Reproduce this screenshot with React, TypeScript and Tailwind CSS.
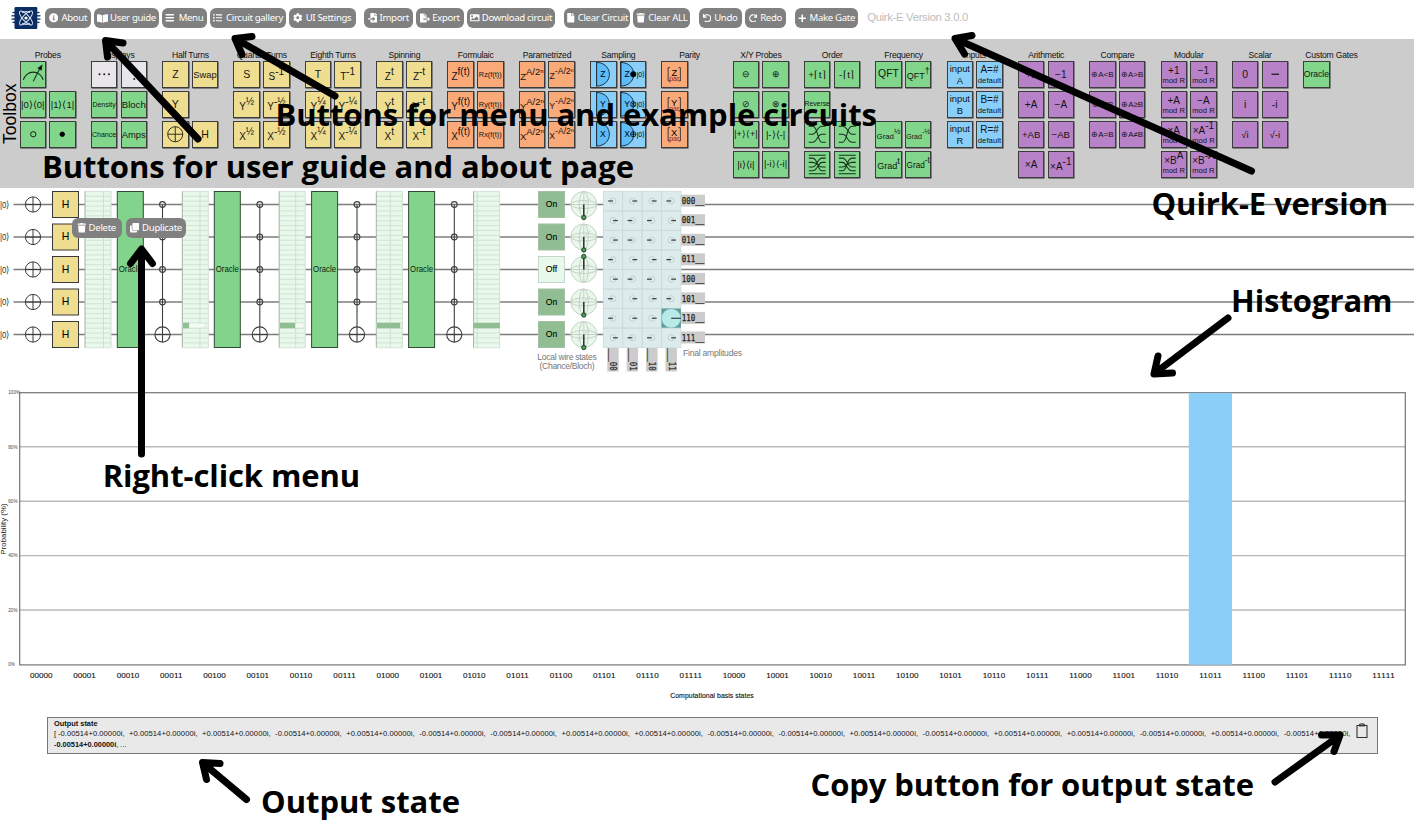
import React from "react";
import {
  FaInfoCircle, FaBookOpen, FaBars, FaListUl, FaCog, FaFileImport, FaFileExport, FaImage,
  FaFile, FaTrash, FaUndo, FaRedo, FaPlus, FaClone,
} from "react-icons/fa";

type Btn = { label: string; icon: React.ReactNode; cls: string };

const buttonGroups: Btn[][] = [
  [
    { label: "About", icon: <FaInfoCircle size={9.5} />, cls: "w-[46px] gap-[3px]" },
    { label: "User guide", icon: <FaBookOpen size={11} />, cls: "w-[65px] gap-[2px]" },
    { label: "Menu", icon: <FaBars size={9.5} />, cls: "w-[44.5px] gap-[4px]" },
    { label: "Circuit gallery", icon: <FaListUl size={9.5} />, cls: "w-[76.5px] gap-[4px]" },
    { label: "UI Settings", icon: <FaCog size={9.5} />, cls: "w-[66.5px] gap-[3px]" },
  ],
  [
    { label: "Import", icon: <FaFileImport size={9.5} />, cls: "w-[48.5px] gap-[2px]" },
    { label: "Export", icon: <FaFileExport size={10} />, cls: "w-[48.5px] gap-[2px]" },
    { label: "Download circuit", icon: <FaImage size={9.5} />, cls: "w-[88px] gap-[2px]" },
  ],
  [
    { label: "Clear Circuit", icon: <FaFile size={9.5} />, cls: "w-[66.5px] gap-[2px]" },
    { label: "Clear ALL", icon: <FaTrash size={9.5} />, cls: "w-[56.5px] gap-[3px]" },
  ],
  [
    { label: "Undo", icon: <FaUndo size={8.5} />, cls: "w-[43px] gap-[3px]" },
    { label: "Redo", icon: <FaRedo size={8.5} />, cls: "w-[41.5px] gap-[3px]" },
  ],
  [{ label: "Make Gate", icon: <FaPlus size={8.5} />, cls: "w-[63.5px] gap-[3px]" }],
];

function ToolButton({ label, icon, cls }: Btn) {
  return (
    <button
      className={`flex h-[20px] shrink-0 items-center justify-center rounded-[6px] bg-[#808080] font-['Noto_Sans',sans-serif] text-[9.6px] leading-none tracking-[-0.32px] whitespace-nowrap text-white ${cls}`}
    >
      {icon}
      <span>{label}</span>
    </button>
  );
}

function Logo() {
  return (
    <svg width="30" height="24" viewBox="0 0 30 24" className="block shrink-0">
      {[5.5, 8.8, 12.1, 15.4].map((y) => (
        <path key={y} d={`M${y < 6 || y > 15 ? 1.5 : 0.5} ${y + 1}H${y < 6 || y > 15 ? 28.5 : 29.5}`} stroke="#0c2f66" strokeWidth="1.3" />
      ))}
      <rect x="3.5" y="1" width="22.8" height="22" rx="1.2" fill="#0a2d63" />
      <g fill="none" stroke="#dfe8f5" strokeWidth="1">
        <ellipse cx="15" cy="12" rx="9" ry="3.2" transform="rotate(47 15 12)" />
        <ellipse cx="15" cy="12" rx="9" ry="3.2" transform="rotate(-47 15 12)" />
        <path d="M11 6.500Q15 4.500 19 6.500M11 17.500Q15 19.500 19 17.500" />
      </g>
      <circle cx="15" cy="12" r="1.6" fill="#fff" />
    </svg>
  );
}

type G =
  | null
  | { k: "t"; t: string; f?: string }
  | { k: "p"; b: string; s: string; f?: string; m?: string }
  | { k: "2"; a: string; b: string; f: string; h: string }
  | { k: "s"; n: React.ReactNode };

const F11 = "text-[10.5px]";
const t = (s: string, f = "text-[9.6px]"): G => ({ k: "t", t: s, f });
const p = (b: string, s: string, f = "text-[10px]"): G => ({ k: "p", b, s, f });
const mod = (b: string, s = ""): G => ({ k: "p", b, s, f: "text-[10px]", m: "mod R" });
const input = (x: string): G => ({ k: "2", a: "input", b: x, f: "text-[9.4px]", h: "text-[9.4px]" });
const dflt = (x: string): G => ({ k: "2", a: x, b: "default", f: "text-[10px]", h: "text-[7.8px]" });
const s = (n: React.ReactNode): G => ({ k: "s", n });

const txt = "font-['Liberation_Sans',Arial,sans-serif]";

const sampler = (l: string, sym: number) =>
  s(
    <>
      <path d={sym < 0 ? "M6 0v26" : "M0 0v26"} stroke="#1c2a33" strokeWidth="1" />
      <path
        d={sym < 0 ? "M6 .5C14 .5 19.5 6 19.5 13S14 25.5 6 25.5Z" : "M0 .5C8 .5 13.5 6 13.5 13S8 25.5 0 25.5Z"}
        fill="#5dbcf9" stroke="#1c2a33" strokeWidth="1"
      />
      <text x={sym < 0 ? 12.5 : 6.5} y="16.2" textAnchor="middle" fontSize="9" className={txt}>{l}</text>
      {sym >= 0 && (
        <>
          <circle cx="13" cy="13" r="2.8" fill={sym === 0 ? "#000" : "none"} stroke="#000" strokeWidth=".8" />
          {sym === 1 && <path d="M11 11l4 4M15 11l-4 4" stroke="#000" strokeWidth=".8" />}
          {sym === 2 && <path d="M10.2 13h5.6M13 10.2v5.6" stroke="#000" strokeWidth=".8" />}
          <text x="16.4" y="16" fontSize="8.4" textLength="9" lengthAdjust="spacingAndGlyphs" className={txt}>|0⟩</text>
        </>
      )}
    </>,
  );
const parity = (l: string) =>
  s(
    <>
      <path d="M8.5 6H6.5V20H8.5M17.5 6H19.5V20H17.5" fill="none" stroke="#333" strokeWidth="1" />
      <text x="13" y="15" textAnchor="middle" fontSize="10" className={txt}>{l}</text>
      <text x="13" y="19.800" textAnchor="middle" fontSize="7.4" fill="#a01414" className={txt}>par</text>
    </>,
  );
const swirl = (left: boolean, double: boolean) =>
  s(
    <g transform={left ? undefined : "matrix(-1 0 0 1 26 0)"} fill="none" stroke="#17301a" strokeWidth="1.1">
      {double ? (
        <path d="M4 3.500H22M4 6.500H8C14 6.500 13 20 18 20H22M4 11H8C13 11 14 16 18 16H22M4 16H8C13 16 13 6.500 18 6.500H22M4 20H8C13 20 14 11 18 11H22M4 23H22" />
      ) : (
        <path d="M4 4.500H8C14 4.500 13 21.500 18 21.500H22M4 13H8C12 13 13 4.500 18 4.500H22M4 21.500H8C13 21.500 13 13 18 13H22" />
      )}
    </g>,
  );

const GREEN = "bg-[#82d68c]";
const YELLOW = "bg-[#efdd90]";
const ORANGE = "bg-[#faaa78]";
const BLUE = "bg-[#8acffa]";
const PURPLE = "bg-[#b882c8]";
const GREY = "bg-[#e8e6ea]";

const meter = s(
  <g fill="none" stroke="#17301a" strokeWidth="1.1">
    <path d="M2.500 19A10.8 10.8 0 0 1 23.500 19" />
    <path d="M13 20.500L20.500 6" />
    <path d="M22.200 3.500l-.6 5-3.400-2z" fill="#000" />
  </g>,
);
const dot = (fill: string, r = 2.8) => s(<circle cx="13" cy="13" r={r} fill={fill} stroke="#000" strokeWidth=".9" />);
const plusCircle = s(
  <g fill="none" stroke="#2b2818" strokeWidth="1">
    <circle cx="13" cy="13" r="8" /><path d="M5 13h16M13 5v16" />
  </g>,
);
const ellipsis = s(
  <g fill="#222">
    <circle cx="8" cy="13" r="1.100" /><circle cx="13" cy="13" r="1.100" /><circle cx="18" cy="13" r="1.100" />
  </g>,
);
const vdots = s(
  <g fill="#222">
    <circle cx="13" cy="8" r="1.100" /><circle cx="13" cy="13" r="1.100" /><circle cx="13" cy="18" r="1.100" />
  </g>,
);
const minusBar = s(<path d="M9 13h8" stroke="#222" strokeWidth="1.400" />);

const groups: { name: string; color: string; gates: G[]; colors?: Record<number, string> }[] = [
  { name: "Probes", color: GREEN, gates: [meter, null, t("|0⟩⟨0|", "text-[9.5px]"), t("|1⟩⟨1|", "text-[9.5px]"), dot("none"), dot("#000", 2.4)] },
  {
    name: "Displays", color: GREEN, colors: { 0: GREY, 1: GREY },
    gates: [ellipsis, vdots, t("Density", "text-[7px]"), t("Bloch"), t("Chance", "text-[7px]"), t("Amps", "text-[9.4px]")],
  },
  { name: "Half Turns", color: YELLOW, gates: [t("Z", F11), t("Swap", "text-[9.4px]"), t("Y", F11), null, plusCircle, t("H", F11)] },
  { name: "Quarter Turns", color: YELLOW, gates: [t("S", F11), p("S", "-1"), p("Y", "½"), p("Y", "-½"), p("X", "½"), p("X", "-½")] },
  { name: "Eighth Turns", color: YELLOW, gates: [t("T", F11), p("T", "-1"), p("Y", "¼"), p("Y", "-¼"), p("X", "¼"), p("X", "-¼")] },
  { name: "Spinning", color: YELLOW, gates: [p("Z", "t"), p("Z", "-t"), p("Y", "t"), p("Y", "-t"), p("X", "t"), p("X", "-t")] },
  {
    name: "Formulaic", color: ORANGE,
    gates: [p("Z", "f(t)"), t("Rz(f(t))", "text-[7.4px]"), p("Y", "f(t)"), t("Ry(f(t))", "text-[7.4px]"), p("X", "f(t)"), t("Rx(f(t))", "text-[7.4px]")],
  },
  {
    name: "Parametrized", color: ORANGE,
    gates: [p("Z", "A/2ⁿ", "text-[9.5px]"), p("Z", "-A/2ⁿ", "text-[8.6px]"), p("Y", "A/2ⁿ", "text-[9.5px]"), p("Y", "-A/2ⁿ", "text-[8.6px]"), p("X", "A/2ⁿ", "text-[9.5px]"), p("X", "-A/2ⁿ", "text-[8.6px]")],
  },
  { name: "Sampling", color: BLUE, gates: [sampler("Z", -1), sampler("Z", 0), sampler("Y", -1), sampler("Y", 1), sampler("X", -1), sampler("X", 2)] },
  { name: "Parity", color: ORANGE, gates: [parity("Z"), null, parity("Y"), null, parity("X"), null] },
  {
    name: "X/Y Probes", color: GREEN,
    gates: [t("⊖", "text-[9px]"), t("⊕", "text-[9px]"), t("⊘", "text-[9px]"), t("⊗", "text-[9px]"), t("|+⟩⟨+|", "text-[9px]"), t("|-⟩⟨-|"), t("|i⟩⟨i|"), t("|-i⟩⟨-i|", "text-[9.2px]")],
  },
  {
    name: "Order", color: GREEN,
    gates: [t("+⌈t⌉", "text-[9.8px] tracking-[0.4px]"), t("-⌈t⌉", "text-[9.8px] tracking-[0.4px]"), t("Reverse", "text-[6.8px]"), null, swirl(true, false), swirl(false, false), swirl(true, true), swirl(false, true)],
  },
  {
    name: "Frequency", color: GREEN,
    gates: [t("QFT", "text-[10.4px]"), p("QFT", "†", "text-[9px]"), null, null, p("Grad", "½", "text-[7.8px]"), p("Grad", "-½", "text-[7px]"), p("Grad", "t", "text-[9px]"), p("Grad", "-t", "text-[8.2px]")],
  },
  { name: "Inputs", color: BLUE, gates: [input("A"), dflt("A=#"), input("B"), dflt("B=#"), input("R"), dflt("R=#")] },
  { name: "Arithmetic", color: PURPLE, gates: [t("+1", "text-[10px]"), t("−1", "text-[10px]"), t("+A", "text-[10px]"), t("−A", "text-[10px]"), t("+AB"), t("−AB"), t("×A", "text-[10px]"), p("×A", "-1")] },
  {
    name: "Compare", color: PURPLE,
    gates: [t("⊕A<B", "text-[7.9px]"), t("⊕A>B", "text-[7.9px]"), t("⊕A≤B", "text-[7.9px]"), t("⊕A≥B", "text-[7.9px]"), t("⊕A=B", "text-[7.9px]"), t("⊕A≠B", "text-[7.9px]")],
  },
  { name: "Modular", color: PURPLE, gates: [mod("+1"), mod("−1"), mod("+A"), mod("−A"), mod("×A"), mod("×A", "-1"), mod("×B", "A"), mod("×B", "-A")] },
  { name: "Scalar", color: PURPLE, gates: [t("0", F11), minusBar, t("i", F11), t("-i", F11), t("√i", "text-[9.6px]"), t("√-i", "text-[9.6px]")] },
  { name: "Custom Gates", color: GREEN, gates: [t("Oracle", "text-[8.6px]")] },
];

function GateBox({ g, color }: { g: G; color: string }) {
  if (!g) return <div />;
  return (
    <div className={`flex h-[26.5px] w-[26.5px] items-center justify-center border border-[#3c3c3c] leading-none whitespace-nowrap text-[#141414] shadow-[0.5px_0.5px_0_#333] ${color}`}>
      {g.k === "t" && <span className={g.f}>{g.t}</span>}
      {g.k === "p" && !g.m && (
        <span className={`flex ${g.f}`}>
          <span className="translate-y-[2px]">{g.b}</span>
          <span className="-translate-y-[3px]">{g.s}</span>
        </span>
      )}
      {g.k === "p" && g.m && (
        <span className="flex flex-col items-center">
          <span className={`flex h-[12px] items-center ${g.f}`}>
            {g.b}
            {g.s && <span className="-translate-y-[5px]">{g.s}</span>}
          </span>
          <span className="text-[7.6px]">{g.m}</span>
        </span>
      )}
      {g.k === "2" && (
        <span className="flex flex-col items-center gap-[2px]">
          <span className={g.f}>{g.a}</span>
          <span className={g.h}>{g.b}</span>
        </span>
      )}
      {g.k === "s" && <svg width="24.5" height="24.5" viewBox="0 0 26 26" className="block overflow-visible">{g.n}</svg>}
    </div>
  );
}

function Toolbox() {
  return (
    <section className="flex h-[149px] bg-[#cccccc] pt-[10px]">
      <div className="flex w-[19.5px] shrink-0 items-center justify-center">
        <span className="mt-[-10px] ml-[2px] -rotate-90 text-[17.5px] leading-none">Toolbox</span>
      </div>
      {groups.map((g) => (
        <div key={g.name} className="flex w-[71.32px] shrink-0 flex-col">
          <h3 className="flex h-[12.3px] w-[56.6px] items-center justify-center text-[8.6px] leading-none tracking-[-0.22px] whitespace-nowrap text-[#111]">{g.name}</h3>
          <div className="grid auto-rows-[26.5px] grid-cols-[26.5px_26.5px] gap-x-[3.2px] gap-y-[3.5px]">
            {g.gates.map((x, i) => (
              <GateBox key={i} g={x} color={g.colors?.[i] ?? g.color} />
            ))}
          </div>
        </div>
      ))}
    </section>
  );
}

const wires = [204.5, 237, 269.5, 302, 334.5];
const displays = [
  { x: 85, div: 103.5, bar: 0, box: 0 },
  { x: 182.3, div: 200, bar: 6.5, box: 205 },
  { x: 279.2, div: 295.7, bar: 15.8, box: 304 },
  { x: 376.3, div: 390.3, bar: 23.5, box: 401 },
  { x: 473.6, div: 477.3, bar: 26, box: 0 },
];
const oracles = [117.3, 214.3, 311.6, 408.6];
const controls = [162.5, 259.8, 357, 454.3];
const signs = ["-++-", "+--+", "+--+", "-++-", "+--+", "-++-", "-++*", "+--+"];
const on = [1, 1, 0, 1, 1];

function Circuit() {
  return (
    <svg width="1414" height="192" viewBox="0 188 1414 192" className={`block shrink-0 ${txt}`}>
      {wires.map((y) => (
        <g key={y}>
          <text x="0" y={y + 3} fontSize="9.5" textLength="9.800" lengthAdjust="spacingAndGlyphs" fill="#333">|0⟩</text>
          <path d={`M13.5 ${y}H1414`} stroke="#7c7c7c" strokeWidth="1.3" />
          <g fill="none" stroke="#3a3a3a" strokeWidth="1">
            <circle cx="33" cy={y} r="7.6" />
            <path d={`M25.4 ${y}h15.2M33 ${y - 7.6}v15.2`} />
          </g>
          <rect x="52.5" y={y - 13} width="26" height="26" fill="#efdd90" stroke="#3a3a3a" />
          <text x="65.5" y={y + 3.4} textAnchor="middle" fontSize="10.5">H</text>
        </g>
      ))}
      {displays.map((d) => (
        <g key={d.x}>
          <rect x={d.x} y="191.3" width="26" height="156.4" fill="#e8f8ea" />
          {Array.from({ length: 33 }, (_, i) => (
            <path key={i} d={`M${d.x} ${191.4 + i * 4.885}h26`} stroke="#cfe0d1" strokeWidth=".9" />
          ))}
          <path d={`M${d.div} 191.3v156.4M${d.x + 26} 191.3v156.4`} stroke="#cfe0d1" />
          <path d={`M${d.x} 191.3v156.4`} stroke="#a5b3a7" />
          {d.box > 0 && <rect x={d.x} y="323" width={d.box - d.x} height="5" fill="#f4fcf4" stroke="#cfe0d1" strokeWidth=".7" />}
          {d.bar > 0 && <rect x={d.x + 0.3} y="322.8" width={d.bar} height="5.4" fill="#90bd92" />}
        </g>
      ))}
      {oracles.map((x) => (
        <g key={x}>
          <rect x={x} y="191.5" width="26" height="156" fill="#82d48c" stroke="#2f4a33" />
          <text x={x + 13} y="272.4" textAnchor="middle" fontSize="8.6" textLength="23" lengthAdjust="spacingAndGlyphs" fill="#0c1f10">Oracle</text>
        </g>
      ))}
      {controls.map((x) => (
        <g key={x} fill="none" stroke="#3f3f3f" strokeWidth="1.1">
          <path d={`M${x} 204.5V342`} />
          {wires.slice(0, 4).map((y) => (
            <circle key={y} cx={x} cy={y} r="2.9" />
          ))}
          <circle cx={x} cy="334.5" r="7.6" />
          <path d={`M${x - 7.6} 334.5h15.2`} />
        </g>
      ))}
      {wires.map((y, i) => (
        <g key={y}>
          <rect x="538.5" y={y - 13} width="26" height="26" fill={on[i] ? "#90be92" : "#e8f8ea"} stroke={on[i] ? "#a3bfa5" : "#c6d6c8"} />
          <text x="551.5" y={y + 2.5} textAnchor="middle" fontSize="8.6" stroke="#000" strokeWidth=".12">{on[i] ? "On" : "Off"}</text>
          <g fill="none" stroke="#c2cdc3" strokeWidth=".9">
            <circle cx="583.8" cy={y} r="13" fill="#e8f8ea" />
            <ellipse cx="583.8" cy={y} rx="13" ry="4" />
            <ellipse cx="583.8" cy={y} rx="4.5" ry="13" />
            <path d={`M570.8 ${y}h26M583.8 ${y - 13}v26M578 ${y + 6}l12-12`} />
          </g>
          <path d={`M583.8 ${y}v${on[i] ? 13 : -13}`} stroke="#222" strokeWidth="1.4" />
          <circle cx="583.8" cy={y + (on[i] ? 13 : -13)} r="2.2" fill="#4e9a58" stroke="#1d3a20" strokeWidth=".9" />
        </g>
      ))}
      <rect x="603.3" y="191.3" width="77.6" height="156.3" fill="#dcebeb" />
      {signs.map((row, r) =>
        row.split("").map((c, i) => {
          const x = 603.3 + i * 19.4;
          const y = 191.3 + r * 19.54;
          const cx = x + 9.7;
          const cy = y + 9.7;
          return c === "*" ? (
            <g key={`${r}${i}`}>
              <rect x={x} y={y} width="19.4" height="19.5" fill="#5f9a9a" />
              <circle cx={cx} cy={cy} r="9.6" fill="#b8eaea" stroke="#7dbcbc" strokeWidth=".5" />
              <path d={`M${cx} ${cy}h9.7`} stroke="#222" />
            </g>
          ) : (
            <g key={`${r}${i}`}>
              <rect x={x} y={y} width="19.4" height="19.54" fill="none" stroke="#cddada" strokeWidth=".8" />
              <circle cx={cx} cy={cy} r="3" fill="none" stroke="#bccaca" strokeWidth=".8" />
              <path d={`M${cx} ${cy}h${c === "-" ? -4.8 : 4.8}`} stroke="#3a3f3f" strokeWidth="1.2" />
            </g>
          );
        }),
      )}
      {signs.map((_, r) => (
        <g key={r}>
          <rect x="681" y={194.7 + r * 19.54} width="24" height="12" fill="#cccccc" />
          <text x="681.8" y={203.8 + r * 19.54} fontSize="8.8" textLength="22.500" lengthAdjust="spacingAndGlyphs" fill="#222" stroke="#222" strokeWidth=".25" className="font-['DejaVu_Sans_Mono',monospace]">
            {r.toString(2).padStart(3, "0")}__
          </text>
        </g>
      ))}
      {["00", "01", "10", "11"].map((l, i) => (
        <g key={l}>
          <rect x={607.3 + i * 19.4} y="348" width="11.4" height="23.5" fill="#cccccc" />
          <text transform={`translate(${610.3 + i * 19.4} 348.3) rotate(90)`} fontSize="8.8" textLength="22.500" lengthAdjust="spacingAndGlyphs" fill="#222" stroke="#222" strokeWidth=".25" className="font-['DejaVu_Sans_Mono',monospace]">
            ___{l}
          </text>
        </g>
      ))}
      <g fontSize="8.6" fill="#777">
        <text x="567" y="360" textAnchor="middle" textLength="59.5">Local wire states</text>
        <text x="567" y="369" textAnchor="middle" textLength="55">(Chance/Bloch)</text>
        <text x="683" y="355.6" textLength="59">Final amplitudes</text>
      </g>
    </svg>
  );
}

function Histogram() {
  const ys = [392.7, 446.8, 501.2, 555.6, 610];
  return (
    <svg width="1414" height="330" viewBox="0 380 1414 330" className={`block shrink-0 ${txt}`}>
      {ys.slice(1).map((y) => (
        <path key={y} d={`M20 ${y}H1405`} stroke="#b9b9b9" strokeWidth="1.4" />
      ))}
      <rect x="19.7" y="392.7" width="1385.6" height="272.2" fill="none" stroke="#757575" strokeWidth="1.2" />
      <rect x="1188.8" y="392.9" width="43.2" height="271.8" fill="#8bcff9" />
      <g fontSize="4.6" fill="#444">
        {ys.map((y, i) => (
          <text key={y} x="8.3" y={y + 1.7}>{100 - i * 20}%</text>
        ))}
        <text x="8.3" y="666.2">0%</text>
      </g>
      <text transform="translate(5.8 554.5) rotate(-90)" fontSize="7.8" textLength="51" fill="#222">Probability (%)</text>
      <g fontSize="8.1" fill="#111" stroke="#111" strokeWidth=".12" textAnchor="middle">
        {Array.from({ length: 32 }, (_, i) => (
          <text key={i} x={41.3 + i * 43.3} y="677.6" textLength="22.5">{i.toString(2).padStart(5, "0")}</text>
        ))}
      </g>
      <text x="712" y="697.8" textAnchor="middle" fontSize="6.9" textLength="83.5" fill="#111" stroke="#111" strokeWidth=".12">Computational basis states</text>
    </svg>
  );
}

const outSigns = "-++-+--++--+-++-+-";

function OutputState() {
  return (
    <section className="mt-[7px] ml-[47px] flex h-[36.5px] w-[1331px] shrink-0 border border-[#777] bg-[#e9e9e9] pt-[1px] pl-[6px] text-[7.4px] leading-[10.4px] whitespace-nowrap text-[#111]">
      <div className="w-[1302px]">
        <div className="font-bold">Output state</div>
        <div className="flex text-[7.6px] tracking-[0.05px]">
          <span className="w-[4px]">[</span>
          {outSigns.split("").map((c, i) => (
            <span key={i} className={c === "-" ? "w-[71.1px] shrink-0" : "w-[73px] shrink-0"}>{c}0.00514+0.00000i,</span>
          ))}
        </div>
        <div><b className="font-bold">-0.00514+0.00000i</b>, ...</div>
      </div>
      <svg width="12" height="16" viewBox="0 0 12 16" className="-ml-[0.5px] mt-[4px] block shrink-0" fill="none" stroke="#333" strokeWidth="1.1">
        <path d="M1 2.5H11V14.5H1ZM3 2.5C3.5 1 5 .8 6 .8S8.5 1 9 2.5" />
        <path d="M3 2.5H9" strokeWidth="1.8" />
      </svg>
    </section>
  );
}

const notes = [
  { t: "Buttons for menu and example circuits", x: 275.5, y: 125.7, w: 601.5 },
  { t: "Buttons for user guide and about page", x: 42, y: 177.7, w: 592 },
  { t: "Quirk-E version", x: 1151.5, y: 214.7, w: 236.5 },
  { t: "Histogram", x: 1231, y: 311.7, w: 161.5 },
  { t: "Right-click menu", x: 102.7, y: 487, w: 257.5 },
  { t: "Output state", x: 261, y: 812.5, w: 199 },
  { t: "Copy button for output state", x: 810.5, y: 795.7, w: 443.5 },
];
const arrows = [
  "M198 139L106 41M123 43L105.5 40.5L107.5 57",
  "M335 96L236 39M252 36.5L235 38.5L242 54.5",
  "M1251.5 171L956 39M972 35.5L955 38.5L964.5 54",
  "M141.5 454V250M130.5 263.5L141.5 249L152.5 263.5",
  "M1228 318L1155 373M1158 356L1154 374L1172.5 373",
  "M246.5 799.5L203 763M220 763.5L202.5 762.5L206.5 779.5",
  "M1275 782L1339 736M1321.5 735L1340 735L1334 751.5",
];

export default function App() {
  return (
    <main className="relative flex h-[829px] w-[1414px] flex-col overflow-hidden bg-white font-['Liberation_Sans',Arial,sans-serif] text-black">
      <header className="flex h-[39px] shrink-0 items-center pb-[3px] pl-[10.5px]">
        <Logo />
        <nav className="ml-[4.5px] flex gap-[8.7px]">
          {buttonGroups.map((g, i) => (
            <div key={i} className="flex gap-[3px]">
              {g.map((b) => (
                <ToolButton key={b.label} {...b} />
              ))}
            </div>
          ))}
        </nav>
        <span className="ml-[9px] text-[11.3px] leading-none tracking-[-0.32px] whitespace-nowrap text-[#bdbdbd]">Quirk-E Version 3.0.0</span>
      </header>
      <Toolbox />
      <Circuit />
      <Histogram />
      <OutputState />
      <div className="absolute top-[218px] left-[71.5px] flex gap-[4px]">
        <ToolButton label="Delete" icon={<FaTrash size={9.5} />} cls="w-[50px] gap-[2px]" />
        <ToolButton label="Duplicate" icon={<FaClone size={9.5} />} cls="w-[60.5px] gap-[3px]" />
      </div>
      <svg width="1414" height="829" viewBox="0 0 1414 829" className="pointer-events-none absolute inset-0">
        <g fill="none" stroke="#000" strokeWidth="7" strokeLinecap="round" strokeLinejoin="round">
          {arrows.map((d) => (
            <path key={d} d={d} />
          ))}
        </g>
        {notes.map((n) => (
          <text key={n.t} x={n.x} y={n.y} textLength={n.w} fontSize="31" fontWeight="700" className="font-['Open_Sans','Noto_Sans',sans-serif]">
            {n.t}
          </text>
        ))}
      </svg>
    </main>
  );
}
